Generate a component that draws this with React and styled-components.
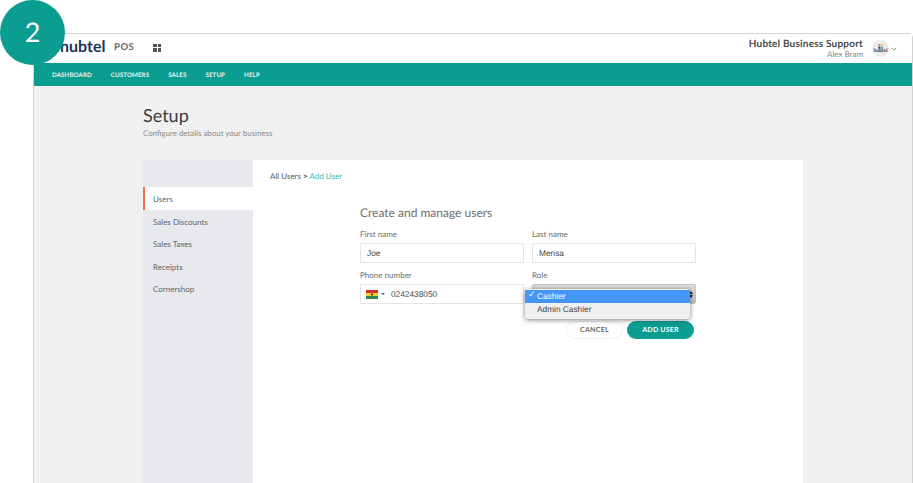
import styled, { createGlobalStyle } from 'styled-components';

const GlobalStyle = createGlobalStyle`
  html, body {
    margin: 0;
    height: 100%;
    background: #fff;
    overflow: hidden;
  }
  body {
    font-family: "Lato", "Open Sans", sans-serif;
    color: #4a4a4a;
    text-rendering: geometricPrecision;
  }
`;

const navItems = ['DASHBOARD', 'CUSTOMERS', 'SALES', 'SETUP', 'HELP'];
const sideItems = ['Users', 'Sales Discounts', 'Sales Taxes', 'Receipts', 'Cornershop'];

const Flag = () => (
  <svg width="12" height="9" viewBox="0 0 12 9">
    <rect width="12" height="3" fill="#d0332b" />
    <rect y="3" width="12" height="3" fill="#f5c92f" />
    <rect y="6" width="12" height="3" fill="#2f8a4a" />
    <circle cx="6" cy="4.5" r="1" fill="#222" />
  </svg>
);

const Avatar = () => (
  <AvatarCircle>
    <AvatarMark viewBox="0 0 8 7">
      <rect x="0.5" width="3" height="3" fill="#e8663c" />
      <rect x="4.5" width="3" height="3" fill="#f0b93a" />
      <rect x="0.5" y="4" width="3" height="3" fill="#1c3f66" />
      <rect x="4.5" y="4" width="3" height="3" fill="#0a9c8f" />
    </AvatarMark>
    <AvatarText>hubtel</AvatarText>
  </AvatarCircle>
);

const App = () => {
  return (
    <>
      <GlobalStyle />
      <Page>
        <StepBadge>2</StepBadge>
        <Window>
          <Header>
            <Brand>
              <Logo>hubtel</Logo>
              <Pos>POS</Pos>
              <GridIcon>
                <i /><i /><i /><i />
              </GridIcon>
            </Brand>
            <Account>
              <AccountText>
                <Business>Hubtel Business Support</Business>
                <UserName>Alex Bram</UserName>
              </AccountText>
              <Avatar />
              <Caret viewBox="0 0 8 5">
                <path d="M1 1l3 3 3-3" fill="none" stroke="#666" strokeWidth="1" />
              </Caret>
            </Account>
          </Header>
          <Nav>
            {navItems.map((item) => (
              <NavItem key={item}>{item}</NavItem>
            ))}
          </Nav>
          <Content>
            <Title>Setup</Title>
            <Subtitle>Configure details about your business</Subtitle>
            <Card>
              <Sidebar>
                {sideItems.map((item) => (
                  <SideItem key={item} $active={item === 'Users'}>{item}</SideItem>
                ))}
              </Sidebar>
              <Main>
                <Crumbs>
                  All Users <Sep>&gt;</Sep> <CrumbLink>Add User</CrumbLink>
                </Crumbs>
                <Form>
                  <FormTitle>Create and manage users</FormTitle>
                  <Fields>
                    <Field>
                      <Label>First name</Label>
                      <FakeInput>Joe</FakeInput>
                    </Field>
                    <Field>
                      <Label>Last name</Label>
                      <FakeInput>Mensa</FakeInput>
                    </Field>
                    <Field>
                      <Label>Phone number</Label>
                      <FakeInput $phone>
                        <Flag />
                        <FlagCaret />
                        0242438050
                      </FakeInput>
                    </Field>
                    <Field>
                      <Label>Role</Label>
                      <SelectBox>
                        <SelectArrows>
                          <b /><u />
                        </SelectArrows>
                      </SelectBox>
                    </Field>
                    <Menu>
                      <MenuItem $selected><Check>✓</Check>Cashier</MenuItem>
                      <MenuItem>Admin Cashier</MenuItem>
                    </Menu>
                  </Fields>
                  <Actions>
                    <CancelButton>CANCEL</CancelButton>
                    <AddButton>ADD USER</AddButton>
                  </Actions>
                </Form>
              </Main>
            </Card>
          </Content>
        </Window>
      </Page>
    </>
  );
};

const Page = styled.div`
  position: relative;
  width: 913px;
  height: 483px;
  padding: 33px 0 0 33px;
  box-sizing: border-box;
  overflow: hidden;
`;

const StepBadge = styled.div`
  position: absolute;
  top: 0;
  left: 0;
  width: 65px;
  height: 65px;
  border-radius: 50%;
  background: #0b9d8f;
  color: #fff;
  font-size: 27px;
  line-height: 63px;
  text-align: center;
  z-index: 2;
`;

const Window = styled.div`
  display: flex;
  flex-direction: column;
  height: 450px;
  box-sizing: border-box;
  border: 1px solid #d4d4d4;
  border-bottom: none;
  border-radius: 5px 5px 0 0;
`;

const Header = styled.div`
  display: flex;
  justify-content: space-between;
  align-items: center;
  height: 29px;
  flex-shrink: 0;
  background: #fff;
  padding: 0 15px 0 26px;
`;

const Brand = styled.div`
  display: flex;
  align-items: center;
`;

const Logo = styled.div`
  font-size: 16px;
  font-weight: 700;
  color: #1c3557;
  width: 46px;
  margin-bottom: 5px;
`;

const Pos = styled.div`
  font-size: 9.5px;
  font-weight: 700;
  letter-spacing: 0.5px;
  color: #666;
  margin: 0 0 2px 8px;
`;

const GridIcon = styled.div`
  display: grid;
  grid-template-columns: 3.5px 3.5px;
  grid-auto-rows: 3.5px;
  gap: 1px;
  margin: 0 0 2px 19px;

  i {
    background: #555;
  }
`;

const Account = styled.div`
  display: flex;
  align-items: center;
`;

const AccountText = styled.div`
  display: flex;
  flex-direction: column;
  align-items: flex-end;
  margin-right: 9px;
`;

const Business = styled.div`
  font-size: 10px;
  line-height: 11px;
  font-weight: 700;
  letter-spacing: 0.2px;
  color: #4a4a4a;
`;

const UserName = styled.div`
  font-size: 8px;
  line-height: 9px;
  color: #888;
`;

const AvatarCircle = styled.div`
  display: flex;
  flex-direction: column;
  align-items: center;
  justify-content: center;
  width: 17px;
  height: 17px;
  border-radius: 50%;
  background: #ececec;
`;

const AvatarMark = styled.svg`
  display: block;
  width: 5px;
  height: 5px;
`;

const AvatarText = styled.div`
  font-size: 5px;
  line-height: 5px;
  font-weight: 700;
  color: #1c3557;
`;

const Caret = styled.svg`
  width: 6px;
  height: 4px;
  margin-left: 2px;
`;

const Nav = styled.div`
  display: flex;
  align-items: center;
  gap: 19px;
  height: 23px;
  flex-shrink: 0;
  padding: 2px 0 0 18px;
  box-sizing: border-box;
  background: #0b9d8f;
`;

const NavItem = styled.div`
  font-size: 6.2px;
  font-weight: 700;
  letter-spacing: 0.1px;
  color: #e6f5f3;
`;

const Content = styled.div`
  flex: 1;
  min-height: 0;
  background: #f0f0f0;
  padding: 17px 109px 0 109px;
`;

const Title = styled.div`
  font-size: 18px;
  line-height: 24px;
  color: #3c3c3c;
`;

const Subtitle = styled.div`
  font-size: 7.9px;
  line-height: 12px;
  color: #8a8a8a;
`;

const Card = styled.div`
  display: flex;
  height: 340px;
  margin-top: 21px;
`;

const Sidebar = styled.div`
  width: 110px;
  flex-shrink: 0;
  padding-top: 27px;
  background: #e7e9ec;
`;

const SideItem = styled.div`
  height: 22.6px;
  line-height: 24px;
  box-sizing: border-box;
  padding-left: ${(p) => (p.$active ? '8px' : '10px')};
  border-left: ${(p) => (p.$active ? '2px solid #f26b4b' : 'none')};
  background: ${(p) => (p.$active ? '#fff' : 'transparent')};
  font-size: 8px;
  color: #666;
`;

const Main = styled.div`
  flex: 1;
  background: #fff;
  padding: 10px 0 0 17px;
`;

const Crumbs = styled.div`
  font-size: 8px;
  line-height: 12px;
  color: #555;
`;

const Sep = styled.span`
  font-weight: 700;
`;

const CrumbLink = styled.span`
  color: #3cb8ab;
`;

const Form = styled.div`
  width: 337px;
  margin: 23px 0 0 90px;
`;

const FormTitle = styled.div`
  font-size: 12px;
  line-height: 16px;
  color: #6f6f6f;
`;

const Fields = styled.div`
  position: relative;
  display: grid;
  grid-template-columns: 164px 164px;
  column-gap: 8px;
  row-gap: 6px;
  margin-top: 7px;
`;

const Field = styled.div`
  display: flex;
  flex-direction: column;
`;

const Label = styled.div`
  font-size: 8px;
  font-weight: 500;
  line-height: 12px;
  margin-bottom: 3px;
  color: #777;
`;

const FakeInput = styled.div`
  display: flex;
  align-items: center;
  height: 20px;
  box-sizing: border-box;
  padding-left: ${(p) => (p.$phone ? '5px' : '6px')};
  border: 1px solid #e4e4e4;
  background: #fff;
  font-family: "Liberation Sans", sans-serif;
  font-size: 8.3px;
  color: #444;
`;

const FlagCaret = styled.span`
  width: 0;
  height: 0;
  margin: 0 6px 0 3px;
  border-left: 2px solid transparent;
  border-right: 2px solid transparent;
  border-top: 2px solid #555;
`;

const SelectBox = styled.div`
  display: flex;
  justify-content: flex-end;
  align-items: center;
  height: 20px;
  box-sizing: border-box;
  padding-right: 2px;
  border: 1px solid #c4c4c4;
  border-radius: 2px;
  background: linear-gradient(#dedede, #bcbcbc);
`;

const SelectArrows = styled.div`
  display: flex;
  flex-direction: column;
  gap: 1px;

  b {
    width: 0;
    border-left: 2px solid transparent;
    border-right: 2px solid transparent;
    border-bottom: 3px solid #222;
  }
  u {
    width: 0;
    border-left: 2px solid transparent;
    border-right: 2px solid transparent;
    border-top: 3px solid #222;
  }
`;

const Menu = styled.div`
  position: absolute;
  top: 61px;
  left: 165px;
  width: 165px;
  box-sizing: border-box;
  padding: 1px 0 3px;
  border-radius: 3px;
  background: #f0f0f0;
  box-shadow: 0 1px 5px rgba(0, 0, 0, 0.5);
`;

const MenuItem = styled.div`
  position: relative;
  height: 13px;
  line-height: 13px;
  padding-left: 12px;
  background: ${(p) => (p.$selected ? '#4596fb' : 'transparent')};
  color: ${(p) => (p.$selected ? '#fff' : '#444')};
  font-family: "Liberation Sans", sans-serif;
  font-size: 8.3px;
`;

const Check = styled.span`
  position: absolute;
  left: 3px;
  top: -1px;
  font-family: "DejaVu Sans", sans-serif;
  font-size: 9px;
  font-weight: 700;
`;

const Actions = styled.div`
  display: flex;
  justify-content: flex-end;
  gap: 4px;
  margin: 17px 3px 0 0;
`;

const CancelButton = styled.div`
  width: 57px;
  height: 18px;
  box-sizing: border-box;
  border: 1px solid #f0f0f0;
  border-radius: 9px;
  background: #fff;
  font-size: 7px;
  font-weight: 700;
  letter-spacing: 0.3px;
  line-height: 16px;
  text-align: center;
  color: #666;
`;

const AddButton = styled.div`
  width: 67px;
  height: 18px;
  border-radius: 9px;
  background: #0b9d8f;
  font-size: 7px;
  font-weight: 700;
  letter-spacing: 0.2px;
  line-height: 18px;
  text-align: center;
  color: #fff;
`;

export default App;
